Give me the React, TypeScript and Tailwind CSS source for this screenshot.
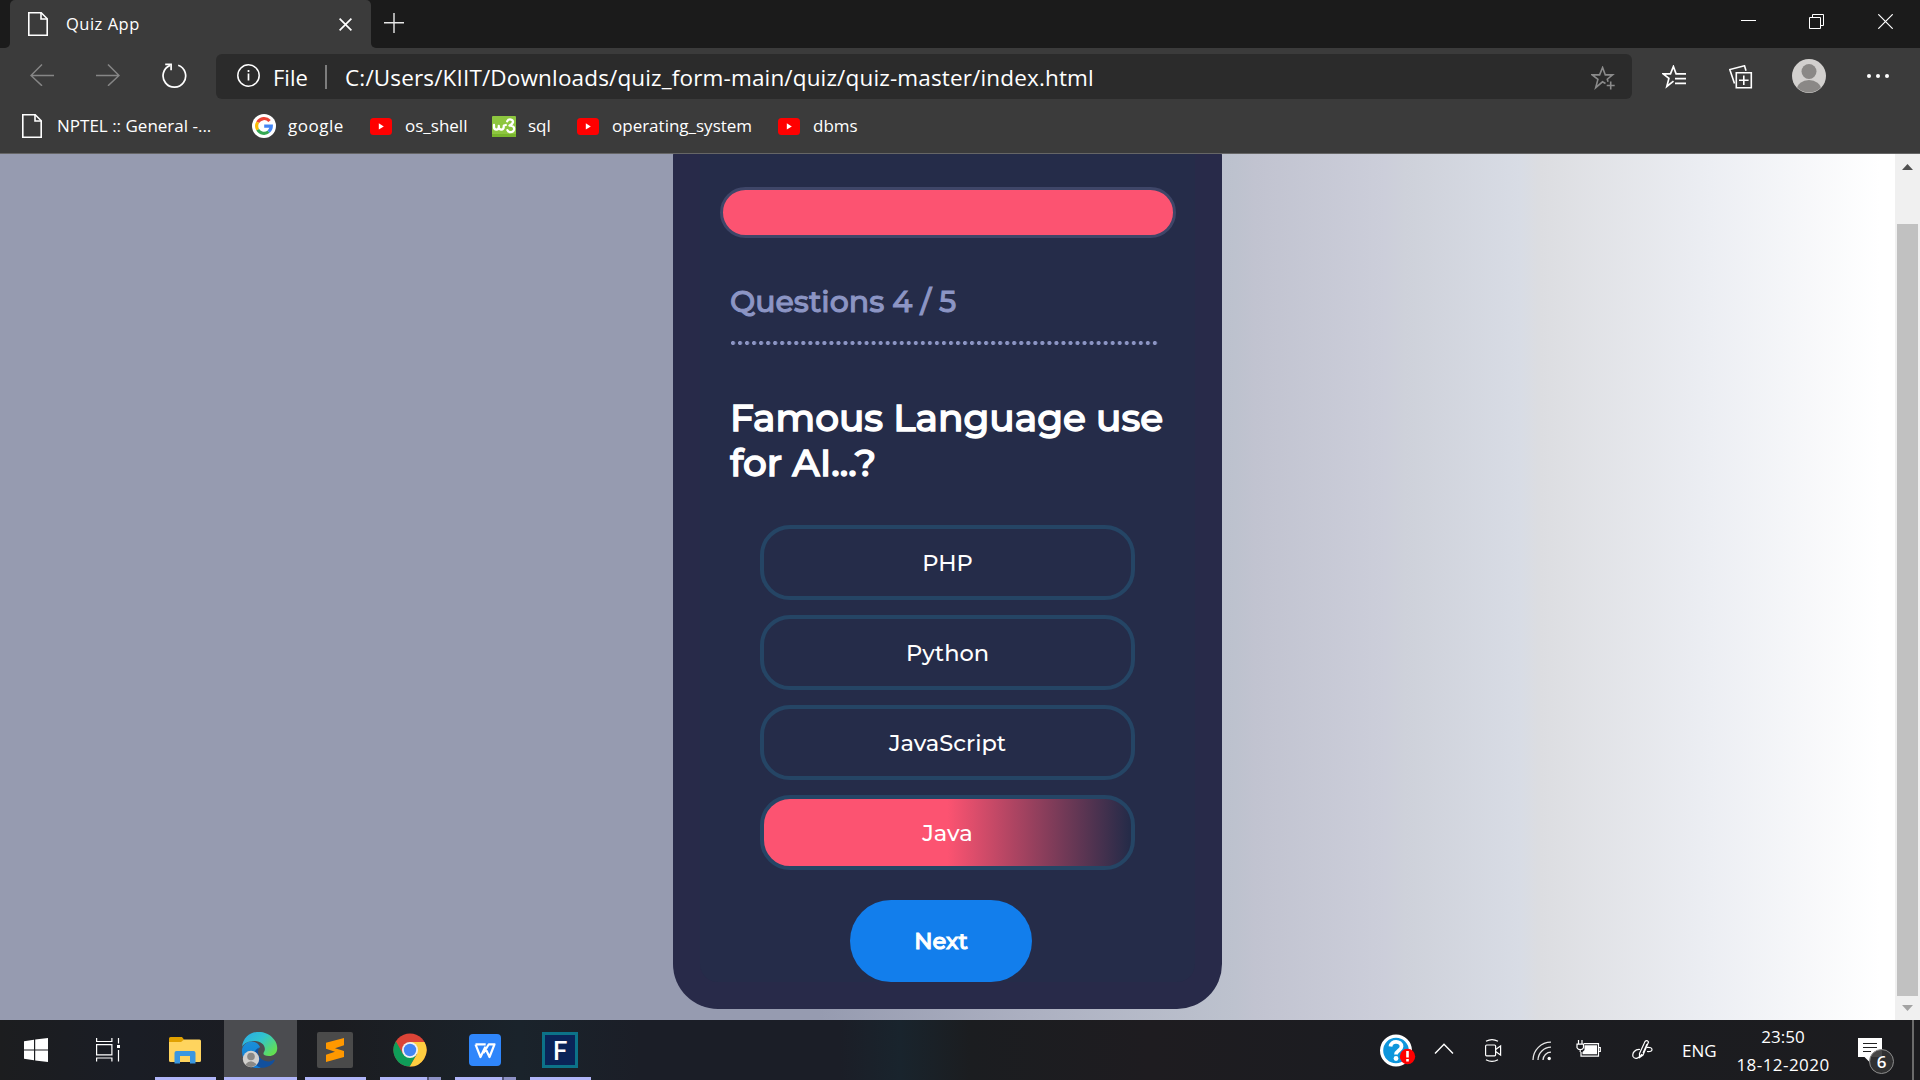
import React from "react";

function Label({ className = "", children }: { className?: string; children: React.ReactNode }) {
  return <span className={`block shrink-0 whitespace-nowrap ${className}`}>{children}</span>;
}

function DocIcon() {
  return (
    <svg width="20" height="24" viewBox="0 0 20 24" fill="none" stroke="#fff" strokeWidth="1.6" className="shrink-0">
      <path d="M.8.8h12.4l6 6v16.4H.8z" />
      <path d="M13 .8V7h6.2" />
    </svg>
  );
}

function YouTubeIcon() {
  return (
    <svg width="22" height="17" viewBox="0 0 22 17" className="shrink-0">
      <rect width="22" height="17" rx="3.5" fill="#f00" />
      <path d="M8.8 5.2v6.4l5-3.2z" fill="#fff" />
    </svg>
  );
}

function GoogleIcon() {
  return (
    <svg width="24" height="24" viewBox="0 0 24 24" className="shrink-0">
      <circle cx="12" cy="12" r="12" fill="#fff" />
      <g fill="none" strokeWidth="3.2">
        <path d="M17.6 7A7.3 7.3 0 0 0 5.7 8.3" stroke="#ea4335" />
        <path d="M5.7 8.3a7.3 7.3 0 0 0 0 7.4" stroke="#fbbc05" />
        <path d="M5.7 15.7a7.3 7.3 0 0 0 11 1.9" stroke="#34a853" />
        <path d="M16.7 17.6a7.3 7.3 0 0 0 2.6-5.5H12.2" stroke="#4285f4" />
      </g>
    </svg>
  );
}

function W3Icon() {
  return (
    <svg width="24" height="21" viewBox="0 0 24 21" className="shrink-0">
      <rect width="24" height="21" rx="1" fill="#8dc63f" />
      <rect y="18" width="24" height="3" fill="#78b52c" />
      <g fill="none" stroke="#fff" strokeWidth="2.3" strokeLinecap="round" strokeLinejoin="round">
        <path d="M2 9v2c0 3.500 4.800 3.500 4.800 0v-1 1c0 3.500 5 3.500 5-.5V9.500l2-.5" />
        <path d="M15.200 5.200c1.500-2.800 6.500-2 5.700 1.200-.4 1.600-2 2.600-3.400 3.200 3.600-.4 5.200 1.800 4.400 4.400-1 3-5.600 2.800-6.500.2" />
      </g>
    </svg>
  );
}

function TitleBar() {
  return (
    <div className="flex h-12 bg-[#1b1b1b]">
      <div className="h-12 w-[10px] bg-[#3b3b3b]">
        <div className="h-full rounded-br-[5px] bg-[#1b1b1b]" />
      </div>
      <div className="flex w-[361px] items-center rounded-t-[5px] bg-[#3b3b3b] pl-[18px]">
        <DocIcon />
        <Label className="ml-[18px] w-[200px] text-[16.5px] tracking-[0.5px]">Quiz App</Label>
        <svg width="13" height="13" viewBox="0 0 13 13" stroke="#fff" strokeWidth="1.7" className="ml-[73px]">
          <path d="M.6.6l11.800 11.800M12.400.6L.6 12.400" />
        </svg>
      </div>
      <div className="h-12 w-[6px] bg-[#3b3b3b]">
        <div className="h-full w-[10px] rounded-bl-[5px] bg-[#1b1b1b]" />
      </div>
      <svg width="20" height="20" viewBox="0 0 20 20" stroke="#e8e8e8" strokeWidth="1.4" className="mt-[13px] ml-[7px]">
        <path d="M10 0v20M0 9.700h20" />
      </svg>
      <div className="mt-[14px] mr-[27px] ml-auto flex">
        <svg width="15" height="15" viewBox="0 0 15 15" stroke="#fff">
          <path d="M0 6.500h15" />
        </svg>
        <svg width="15" height="15" viewBox="0 0 15 15" stroke="#fff" fill="none" className="mr-[54px] ml-[53px]">
          <path d="M.5 3.500h11v11H.5zM3.500 3.500v-3h11v11h-3" />
        </svg>
        <svg width="15" height="15" viewBox="0 0 15 15" stroke="#fff" strokeWidth="1.200">
          <path d="M.3.300l14.400 14.400M14.700.300L.3 14.700" />
        </svg>
      </div>
    </div>
  );
}

function Toolbar() {
  return (
    <div className="flex h-[57px] pt-[6px]">
      <svg width="24" height="22" viewBox="0 0 24 22" fill="none" stroke="#868686" strokeWidth="1.500" className="mt-[10px] ml-[30px]">
        <path d="M24 11.500H1M12 .5L1 11.500l11 10.300" />
      </svg>
      <svg width="24" height="22" viewBox="0 0 24 22" fill="none" stroke="#868686" strokeWidth="1.500" className="mt-[10px] ml-[42px]">
        <path d="M0 11.500h23M12 .5l11 11-11 10.300" />
      </svg>
      <svg width="25" height="25" viewBox="0 0 25 25" fill="none" stroke="#fff" strokeWidth="1.700" className="mt-[9px] ml-[42px]">
        <path d="M16.200 2.200A11.300 11.300 0 1 1 8 2.400" />
        <path d="M3.200 1.300h5.900v5.900" />
      </svg>
      <div className="ml-[29px] flex h-[45px] w-[1416px] items-center rounded-[6px] bg-[#2b2b2b] pl-[21px]">
        <svg width="23" height="23" viewBox="0 0 23 23" fill="none" stroke="#fff" strokeWidth="1.500" className="mb-[2px]">
          <circle cx="11.500" cy="11.500" r="10.700" />
          <path d="M11.500 9.500v7M11.500 6v2" strokeWidth="1.700" />
        </svg>
        <Label className="ml-[13px] w-[52px] pt-[2px] text-[22px]">File</Label>
        <div className="h-6 w-[2px] bg-[#7d7d7d]" />
        <Label className="ml-[18px] w-[1100px] pt-[2px] text-[22.5px] tracking-[0.15px]">C:/Users/KIIT/Downloads/quiz_form-main/quiz/quiz-master/index.html</Label>
        <svg width="24" height="24" viewBox="0 0 24 24" fill="none" stroke="#8b8b8b" strokeWidth="1.600" className="mt-[2px] mr-[17px] ml-auto">
          <path d="M14.500 17.500L11.500 15.800l-6.800 5.900 2.200-8.300L1.200 8.900h7.400l3-7.400 2.700 7.400h7.300l-5.300 4.300.7 2.500" />
          <path d="M19.700 15.500v8M15.700 19.500h8" />
        </svg>
      </div>
      <svg width="24" height="24" viewBox="0 0 24 24" fill="none" stroke="#fff" strokeWidth="1.700" className="mt-[11px] ml-[30px]">
        <path d="M11.500 16.200l-6.700 5.300 2.100-8.100L1.200 8.800h7.300l2.900-7.300 2.700 7.300H24M13 13.700h11M13 18.300h11" />
      </svg>
      <svg width="24" height="24" viewBox="0 0 24 24" fill="none" stroke="#fff" strokeWidth="1.600" className="mt-[11px] ml-[43px]">
        <path d="M7.300 7.800h15v15h-15zM14.800 10.500v9.600M10 15.300h9.600" />
        <path d="M5.500 18.500L.8 4.600 15.500.8l1.500 5" />
      </svg>
      <svg width="34" height="34" viewBox="0 0 34 34" className="mt-[5px] ml-[39px]">
        <clipPath id="avatar"><circle cx="17" cy="17" r="16.500" /></clipPath>
        <circle cx="17" cy="17" r="17" fill="#d2d0ce" />
        <circle cx="17" cy="12.500" r="7.500" fill="#8a8886" />
        <ellipse cx="17" cy="30" rx="12" ry="9" fill="#8a8886" clipPath="url(#avatar)" />
      </svg>
      <div className="mt-[20px] ml-[41px] flex gap-[5px]">
        <i className="size-1 rounded-full bg-white" />
        <i className="size-1 rounded-full bg-white" />
        <i className="size-1 rounded-full bg-white" />
      </div>
    </div>
  );
}

function Bookmarks() {
  return (
    <div className="flex h-[49px] items-center border-b border-[#666] pb-[6px] pl-[22px] text-[17px]">
      <DocIcon />
      <Label className="ml-[15px] w-[195px]">NPTEL :: General -...</Label>
      <GoogleIcon />
      <Label className="ml-[12px] w-[82px] tracking-[0.5px]">google</Label>
      <YouTubeIcon />
      <Label className="ml-[13px] w-[87px]">os_shell</Label>
      <W3Icon />
      <Label className="ml-[12px] w-[49px]">sql</Label>
      <YouTubeIcon />
      <Label className="ml-[13px] w-[166px]">operating_system</Label>
      <YouTubeIcon />
      <Label className="ml-[13px]">dbms</Label>
    </div>
  );
}

function Option({ label, selected = false }: { label: string; selected?: boolean }) {
  const fill = selected
    ? "bg-[linear-gradient(90deg,#fc5371_0%,#fc5371_50%,#252b48_98.500%)]"
    : "";
  return (
    <div className={`flex h-[75px] items-center justify-center rounded-[30px] border-4 border-[#254565] bg-origin-border ${fill}`}>
      <Label className="pt-[3px] text-[22.5px] font-medium">{label}</Label>
    </div>
  );
}

function QuizPage() {
  return (
    <div className="flex h-[866px] overflow-hidden font-['Montserrat','Inter',sans-serif]">
      <div className="flex w-[1895px] items-end bg-[linear-gradient(90deg,#969bb0_0px,#969bb0_820px,#acb0c1_1030px,#bdc2ce_1235px,#c1c3d0_1255px,#ccceda_1385px,#ced1da_1405px,#d8dce5_1520px,#dcdde1_1540px,#eceef3_1710px,#fff_1880px)] pb-[11px] pl-[673px]">
        <div className="h-[897px] w-[549px] shrink-0 rounded-[45px] bg-[#282a49] px-[27px] pb-[27px]">
          <div className="h-full rounded-[18px] bg-[#252c49] px-[20px] pt-[75px]">
            <div className="h-[51px] w-[456px] rounded-full border-[3px] border-[#3f4668] bg-[#fc5371]" />
            <div className="ml-[10px]">
              <Label className="mt-[45px] w-[400px] text-[30px] leading-[38px] font-medium text-[#8c95c4] [-webkit-text-stroke:1px_#8c95c4]">Questions 4 / 5</Label>
              <div className="mt-[20px] ml-px h-1 w-[428px] bg-[radial-gradient(circle_at_2px_2px,#8c95c4_1.700px,transparent_2.400px)] bg-size-[7.040px_4px]" />
              <div className="mt-[50px] text-[37.5px] leading-[45px] font-medium text-white [-webkit-text-stroke:1.400px_#fff]">
                <Label className="w-[400px]">Famous Language use</Label>
                <Label className="w-[400px]">for AI...?</Label>
              </div>
            </div>
            <div className="mt-[40px] ml-[40px] flex w-[375px] flex-col gap-[15px] text-white">
              <Option label="PHP" />
              <Option label="Python" />
              <Option label="JavaScript" />
              <Option label="Java" selected />
            </div>
            <div className="mt-[30px] ml-[130px] flex h-[82px] w-[182px] items-center justify-center rounded-full bg-[#127eec] text-white">
              <Label className="pt-[2px] text-[22.5px] font-medium [-webkit-text-stroke:1px_#fff]">Next</Label>
            </div>
          </div>
        </div>
      </div>
      <div className="flex w-[25px] flex-col items-center bg-[#f0f0f0] pt-[10px]">
        <svg width="11" height="6" viewBox="0 0 11 6"><path d="M5.500 0L11 6H0z" fill="#505050" /></svg>
        <div className="mt-[54px] h-[772px] w-[21px] bg-[#c1c1c1]" />
        <svg width="11" height="6" viewBox="0 0 11 6" className="mt-[9px]"><path d="M5.500 6L11 0H0z" fill="#a3a3a3" /></svg>
      </div>
    </div>
  );
}

function AppSlot({ active = false, split = false, children }: { active?: boolean; split?: boolean; children: React.ReactNode }) {
  return (
    <div className={`flex h-[60px] w-[75px] flex-col items-center ${active ? "bg-[#4b4c50] bg-clip-content pr-px pl-px" : ""}`}>
      <div className="flex h-[57px] items-center pt-[3px] pr-[2px]">{children}</div>
      <div className={`flex h-[3px] justify-between bg-[#b0b5f8] ${active ? "w-full" : "w-[61px]"}`}>
        {split && <div className="ml-auto h-full w-[14px] border-l-2 border-[#55577a] bg-[#8d91c5]" />}
      </div>
    </div>
  );
}

function Taskbar() {
  return (
    <div className="flex h-[60px] bg-[linear-gradient(90deg,#1c1d1f_0px,#1a1d25_130px,#1b1c20_330px,#1a232b_520px,#1b1e27_640px,#1b1e27_840px,#19242d_900px,#1b1d20_970px,#1e1c20_1150px,#1b1c21_1400px,#1c1c1f_1900px)] text-white">
      <svg width="24" height="24" viewBox="0 0 24 24" fill="#fff" className="mt-[18px] ml-[24px]">
        <path d="M0 3.200L10 1.800v9.700H0zM11.200 1.600L24 0v11.500H11.200zM0 12.500h10v9.700L0 20.800zM11.200 12.500H24V24l-12.800-1.600z" />
      </svg>
      <svg width="25" height="24" viewBox="0 0 25 24" fill="none" stroke="#fff" strokeWidth="1.200" className="mt-[18px] ml-[48px]">
        <path d="M.6 0v3.500h15.300V0M.6 6.600h15.300v10.200H.6zM.6 23.500v-3.500h15.300v3.500M22.500 0v5.500M22.500 12v11.500" />
        <rect x="21" y="7" width="3" height="3" fill="#fff" stroke="none" />
      </svg>
      <div className="ml-[27px] flex">
        <AppSlot>
          <svg width="32" height="27" viewBox="0 0 32 27">
            <path d="M0 1.500Q0 0 1.500 0H13l2 2.500-2 3H0z" fill="#e1a100" />
            <path d="M0 5h12l3-2.500h15.500Q32 2.500 32 4v19.500q0 1.500-1.500 1.500h-29Q0 25 0 23.500z" fill="#ffd45e" />
            <path d="M5.500 26.500V16q0-2 2-2h17q2 0 2 2v10.500h-5.500V19H11v7.500z" fill="#3a97e0" />
          </svg>
        </AppSlot>
        <AppSlot active>
          <svg width="36" height="36" viewBox="0 0 36 36">
            <defs>
              <linearGradient id="eg" x1="0" y1="0" x2="1" y2=".7"><stop offset="0" stopColor="#2ba8e8" /><stop offset=".5" stopColor="#31c4cf" /><stop offset="1" stopColor="#63df52" /></linearGradient>
              <linearGradient id="eb" x1="0" y1="0" x2="0" y2="1"><stop offset="0" stopColor="#1a8fd8" /><stop offset="1" stopColor="#0e7ad6" /></linearGradient>
            </defs>
            <path d="M0 18C0 36 14 37 19 35.700 12 33 10 22 18 15 14 6 1 9 0 18z" fill="url(#eb)" />
            <path d="M0 15C2-3 25-5 33.500 9.500 38 19 33 24 27 24c-5 0-6.500-2-5-4 3-5-2-11-9-11C7 9 2 11 0 15z" fill="url(#eg)" />
            <path d="M17 15.500c-4 9.500 5 15 11 13.700 3-.7 4.500-2.200 5-1.500C31 33 25 36 19 35.700 8 33 10 18.500 17 15.500z" fill="#12509e" />
            <circle cx="9" cy="27" r="8.200" fill="#d2d0ce" />
            <circle cx="9" cy="24.500" r="3.800" fill="#8a8886" />
            <path d="M3.300 32.500q5.700-6.500 11.400 0-5.700 5-11.400 0z" fill="#8a8886" />
          </svg>
        </AppSlot>
        <AppSlot>
          <svg width="36" height="36" viewBox="0 0 36 36">
            <rect width="36" height="36" rx="2" fill="#4a4a4a" />
            <path d="M9 10.800L27 6v7.200l-9 3L27 19v6L9 30v-7.200l9-3-9-3z" fill="#ff9800" />
          </svg>
        </AppSlot>
        <AppSlot split>
          <svg width="34" height="34" viewBox="0 0 34 34">
            <circle cx="17" cy="17" r="16.500" fill="#db4437" />
            <path d="M17 9h14.500A16.500 16.500 0 0 1 16.500 33.500L24 21z" fill="#ffcd40" />
            <path d="M2.900 8.300A16.500 16.500 0 0 0 16.700 33.500L23.800 21 17 24 10 21z" fill="#0f9d58" />
            <circle cx="17" cy="17" r="8" fill="#f1f1f1" />
            <circle cx="17" cy="17" r="6.200" fill="#4285f4" />
          </svg>
        </AppSlot>
        <AppSlot split>
          <svg width="32" height="32" viewBox="0 0 32 32">
            <rect width="32" height="32" rx="4" fill="#2f86fb" />
            <path d="M6.500 10.300h10.200M6.500 10.300l5 12.700L16 13.500l4.500 9.500 5-12.700h-5.700L14.500 19" fill="none" stroke="#fff" strokeWidth="2.200" strokeLinejoin="round" />
          </svg>
        </AppSlot>
        <AppSlot>
          <div className="flex size-9 items-center justify-center border-[3px] border-[#0c7288] bg-[#0a2458] pl-px font-['Lato'] text-[26px] leading-none font-semibold">F</div>
        </AppSlot>
      </div>
      <svg width="37" height="34" viewBox="0 0 37 34" className="mt-[13px] ml-auto">
        <circle cx="17" cy="17.500" r="14.400" fill="#0e96dc" stroke="#fff" strokeWidth="3.200" />
        <path d="M11.500 13.500c.5-6.500 11-6 11 0 0 4-5.500 4-5.500 8" fill="none" stroke="#fff" strokeWidth="3.800" />
        <circle cx="17" cy="25.500" r="2.400" fill="#fff" />
        <circle cx="28.500" cy="23.500" r="7.700" fill="#f00" />
        <path d="M28.500 18v6.500M28.500 26v2.600" stroke="#fff" strokeWidth="2.600" />
      </svg>
      <svg width="20" height="12" viewBox="0 0 20 12" fill="none" stroke="#fff" strokeWidth="1.400" className="mt-[23px] ml-[18px]"><path d="M1 10.500L10 1.200l9 9.300" /></svg>
      <svg width="18" height="23" viewBox="0 0 18 23" fill="none" stroke="#fff" strokeWidth="1.200" className="mt-[19px] ml-[30px]">
        <rect x="1.600" y="6" width="10" height="10.800" rx="1" />
        <path d="M11.600 10.500l5-3.500v9l-5-3.500M2 2.300Q8 -1 14 2.300M2 20.700Q8 24 14 20.700" />
      </svg>
      <svg width="20" height="20" viewBox="0 0 20 20" fill="none" stroke="#e6e6e6" strokeWidth="1.300" className="mt-[21px] ml-[30px]">
        <path d="M1 19A18 18 0 0 1 19 1.200M6 19A13 13 0 0 1 19 6.200M11 19A8 8 0 0 1 19 11.200" />
        <circle cx="17.200" cy="17.500" r="1.700" fill="#fff" stroke="none" />
      </svg>
      <svg width="25" height="18" viewBox="0 0 25 18" fill="none" stroke="#fff" strokeWidth="1.200" className="mt-[20px] ml-[24px]">
        <path d="M8 3.600h14.500v12.500H5V12M22.500 7.500h1.800v4h-1.800" />
        <path d="M8.500 5.300H21v9H6.500V12l2-2z" fill="#fff" stroke="none" />
        <path d="M2.500 0v4M6 0v4M1 4.200h6.500v3.500q-1 2-3.200 2T1 7.700zM4.200 9.700V12" />
      </svg>
      <svg width="21" height="21" viewBox="0 0 21 21" fill="none" stroke="#fff" strokeWidth="1.200" className="mt-[19px] ml-[31px]">
        <path d="M7.500 14.500L13 2.500q2-2 3.500.5L11 16l-3.500 2.500zM11 14l4-9M8 10.500C3 10 0 14 1 17.500 3 21 7.500 19 10 15M15 8.500q5-.5 5 2t-5 2" />
      </svg>
      <Label className="mt-[19px] ml-[29px] w-[34px] text-[17px] leading-6">ENG</Label>
      <div className="ml-[20px] flex w-[94px] flex-col items-center pt-[3px] text-[17px] leading-7">
        <Label>23:50</Label>
        <Label className="tracking-[0.450px]">18-12-2020</Label>
      </div>
      <div className="mt-[18px] ml-[28px] flex h-9 w-9">
        <svg width="24" height="26" viewBox="0 0 24 26" className="shrink-0">
          <path d="M0 0h24v19H12.500v6L6.500 19H0z" fill="#fff" />
          <path d="M5 5.500h14M5 9.500h14M5 13.500h8" stroke="#222" strokeWidth="1.200" />
        </svg>
        <div className="relative top-[11px] -left-[13px] flex size-[25px] shrink-0 items-center justify-center rounded-full border border-[#8d8d8d] bg-[#333]/90 text-[17px] font-semibold">6</div>
      </div>
      <div className="mr-[6px] ml-[18px] h-full w-[2px] bg-[#6b6b6b]" />
    </div>
  );
}

export default function App() {
  return (
    <div className="h-[1080px] w-[1920px] overflow-hidden font-['Open_Sans','Noto_Sans',sans-serif] text-white">
      <TitleBar />
      <div className="bg-[#3b3b3b]">
        <Toolbar />
        <Bookmarks />
      </div>
      <QuizPage />
      <Taskbar />
    </div>
  );
}
